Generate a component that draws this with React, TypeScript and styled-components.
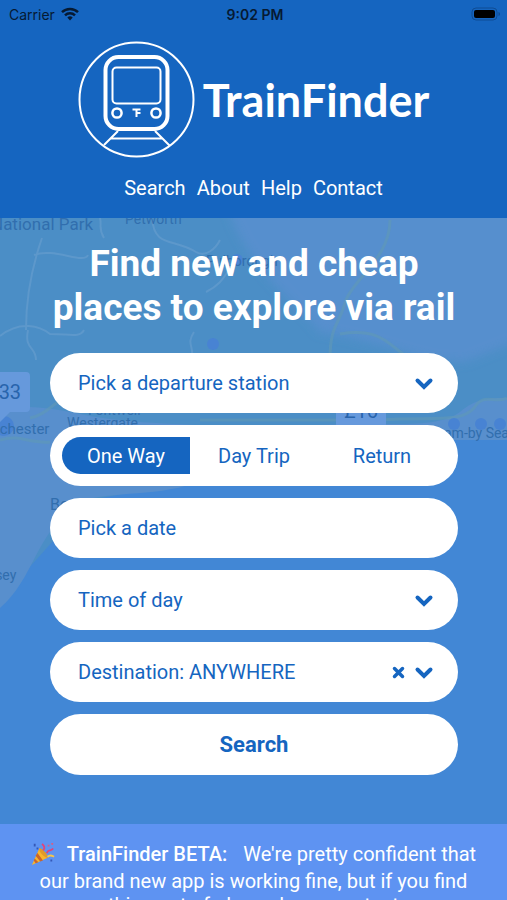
import React, { useState } from "react";
import styled, { createGlobalStyle } from "styled-components";

const BLUE = "#1565c0";

const GlobalStyle = createGlobalStyle`
  *, *::before, *::after { box-sizing: border-box; }
  html, body, #root { height: 100%; }
  body { margin: 0; background: #4287d5; font-family: Roboto, sans-serif; scrollbar-width: none; }
  html { scrollbar-width: none; }
  button, input, select { font: inherit; color: inherit; border: 0; margin: 0; }
`;

const Page = styled.div`
  display: flex;
  flex-direction: column;
  color: #fff;
  font-size: 20px;
`;

const Header = styled.header`
  background: ${BLUE};
  display: flex;
  flex-direction: column;
`;

const StatusBar = styled.div`
  display: grid;
  grid-template-columns: 1fr auto 1fr;
  align-items: center;
  height: 28px;
  padding: 0 6px 0 9px;
  color: #061a33;
  font-family: Inter, sans-serif;
  font-size: 14px;
`;

const Carrier = styled.span`
  display: flex;
  align-items: center;
  gap: 6px;
`;

const Clock = styled.span`
  font-weight: 600;
`;

const Battery = styled.svg`
  justify-self: end;
`;

const Brand = styled.a`
  display: flex;
  align-items: center;
  justify-content: center;
  gap: 8px;
  padding-top: 13px;
  color: #fff;
  text-decoration: none;
`;

const BrandName = styled.span`
  font-family: Lato, sans-serif;
  font-weight: 700;
  font-size: 45px;
  line-height: 52px;
`;

const Nav = styled.nav`
  display: flex;
  justify-content: center;
  gap: 11px;
  padding: 18px 0;
  line-height: 24px;
`;

const NavLink = styled.a`
  color: #fff;
  text-decoration: none;
`;

const Hero = styled.main`
  position: relative;
  padding: 24px 49px 49px 50px;
`;

const MapArt = styled.svg`
  position: absolute;
  top: 0;
  left: 0;
  width: 100%;
  height: 100%;
`;

const Title = styled.h1`
  position: relative;
  margin: 0 -8px 23px;
  font-size: 37px;
  line-height: 44px;
  font-weight: 700;
  text-align: center;
  text-wrap: balance;
`;

const Form = styled.form`
  position: relative;
  display: flex;
  flex-direction: column;
  gap: 12px;
`;

const Field = styled.div`
  display: flex;
  align-items: center;
  height: 60px;
  padding: 0 24px 0 28px;
  gap: 8px;
  border-radius: 30px;
  background: #fff;
  color: ${BLUE};
`;

const Select = styled.select`
  flex: 1;
  min-width: 0;
  height: 100%;
  appearance: none;
  background: transparent;
  outline: none;
`;

const DateInput = styled.input`
  flex: 1;
  min-width: 0;
  height: 100%;
  padding: 0;
  background: transparent;
  outline: none;
  &::placeholder { color: ${BLUE}; opacity: 1; }
`;

const ClearButton = styled.button`
  display: flex;
  padding: 0;
  background: transparent;
`;

const Chevron = styled.svg`
  pointer-events: none;
`;

const Trips = styled.div`
  display: grid;
  grid-template-columns: repeat(3, 1fr);
  padding: 12px;
  border-radius: 31px;
  background: #fff;
`;

const TripButton = styled.button<{ $active: boolean }>`
  height: 37px;
  padding: 0;
  background: ${(p) => (p.$active ? BLUE : "transparent")};
  color: ${(p) => (p.$active ? "#fff" : BLUE)};
  &:first-child { border-radius: 19px 0 0 19px; }
  &:last-child { border-radius: 0 19px 19px 0; }
`;

const SearchButton = styled.button`
  height: 61px;
  border-radius: 31px;
  background: #fff;
  color: ${BLUE};
  font-size: 22px;
  font-weight: 700;
`;

const Banner = styled.aside`
  padding: 15px 28px;
  background: #5e93f2;
  line-height: 24px;
  text-align: center;
`;

const BannerTitle = styled.strong`
  margin: 0 11px 0 7px;
  font-weight: 500;
  line-height: 30px;
`;

const Party = styled.svg`
  vertical-align: -5px;
`;

const Down = () => (
  <Chevron width="20" height="16" viewBox="0 0 20 16" fill="none" stroke={BLUE} strokeWidth="4" strokeLinecap="round" strokeLinejoin="miter" aria-hidden="true">
    <path d="M3.500 5.500 10 12l6.500-6.500" />
  </Chevron>
);

const TrainLogo = () => (
  <svg width="117" height="117" viewBox="0 0 117 117" fill="none" stroke="#fff" aria-hidden="true">
    <circle cx="58.5" cy="58.5" r="57" strokeWidth="2" />
    <rect x="27.500" y="16" width="62" height="72" rx="13" strokeWidth="4" />
    <rect x="34.500" y="26.500" width="48" height="36" rx="4" strokeWidth="2" />
    <circle cx="39" cy="72" r="4.600" strokeWidth="2.500" />
    <circle cx="78" cy="72" r="4.600" strokeWidth="2.500" />
    <path d="M54.500 68.500h8M58.500 68v8M58.500 72h4" strokeWidth="2" />
    <path d="M40 90 26 104M77 90l15 15M33 97.500h51" strokeWidth="2" />
  </svg>
);

const BackgroundMap = () => (
  <MapArt viewBox="0 0 507 606" preserveAspectRatio="xMidYMin slice" fontFamily="Roboto, sans-serif" aria-hidden="true">
    <defs>
      <filter id="soft" x="-10%" y="-10%" width="120%" height="120%">
        <feGaussianBlur stdDeviation="5" />
      </filter>
    </defs>
    <rect width="507" height="606" fill="#4287d5" />
    <path d="M0 0h507v222H340l-140 40-110 20-90 100z" fill="#4b8ec6" />
    <path d="M225-20h300v140l-60 24-30-2c-30-6-70-22-116-28-20-30-74-60-94-134z" fill="#578fce" filter="url(#soft)" />
    <path d="M0 192c30-6 50-2 90 6 60 10 160 12 260 8 60 0 90 2 110-12 16-14 30-14 47-14v42H350c-60 6-100 14-140 36-40 22-90 14-125 24-50 28-48 76-85 108z" fill="#588fcd" />
    <g fill="none" stroke="#699fce" strokeWidth="2" opacity=".6">
      <path d="M42 20c-14 40-16 70-16 92M34 37c20-8 50 10 54 0M0 118c20-16 40-10 50-2 20 0 30 4 34-4M28 112c-4 20 8 16 8 30M152 0c2 30 22 20 44 34 10 6 20-4 24-12M104 20c-6-10-2-12-4-20M192 140c2-12-6-14 2-26M206 74c20-10 20-22 30-30" />
    </g>
    <g fill="none" stroke="#5f98b7" strokeWidth="3" opacity=".65">
      <path d="M390 2c0 40-40 60-46 86-6 20-14 20-14 54M340 116c50-8 50 20 80 28M0 222c20-6 30 4 50 2M30 200c20-4 22-18 40-20M200 202h180c50-4 80 4 94-12 10-16 20-4 33-10" />
    </g>
    <g fill="#4883d3">
      <circle cx="237" cy="42" r="6" />
      <circle cx="213" cy="126" r="6" />
      <circle cx="454" cy="206" r="6" />
      <circle cx="481" cy="206" r="6" />
      <circle cx="500" cy="206" r="6" />
      <circle cx="4" cy="208" r="10" />
    </g>
    <g fill="#316eae" fontSize="14">
      <text x="-9" y="12" fontSize="17">National Park</text>
      <text x="125" y="6">Petworth</text>
      <text x="206" y="48">Pulborough</text>
      <text x="-22" y="216" fontSize="15">Chichester</text>
      <text x="88" y="197">Fontwell</text>
      <text x="67" y="210">Westergate</text>
      <text x="50" y="292" fontSize="16">Bognor</text>
      <text x="-24" y="362">Selsey</text>
      <text x="509" y="220" textAnchor="end">Shoreham-by Sea</text>
    </g>
    <g>
      <path d="M0 154h26q4 0 4 4v32q0 4-4 4H10L0 204z" fill="#6699dc" />
      <rect x="336" y="160" width="50" height="50" rx="4" fill="#6699dc" />
      <g fill="#2864ac" fontSize="20">
        <text x="-13" y="181">£33</text>
        <text x="344" y="200">£16</text>
      </g>
    </g>
  </MapArt>
);

export default function App() {
  const [trip, setTrip] = useState("One Way");
  const [destination, setDestination] = useState("any");
  return (
    <>
      <GlobalStyle />
      <Page>
        <Header>
          <StatusBar>
            <Carrier>
              Carrier
              <svg width="18" height="14" viewBox="0 0 18 14" fill="none" stroke="#061a33" strokeWidth="2.500" aria-hidden="true">
                <path d="M1 5.200a11.500 11.500 0 0 1 16 0M4 8.300a7.200 7.200 0 0 1 10 0" />
                <path d="M6.300 10.600a4 4 0 0 1 5.400 0L9 13.400z" fill="#061a33" stroke="none" />
              </svg>
            </Carrier>
            <Clock>9:02 PM</Clock>
            <Battery width="30" height="14" viewBox="0 0 30 14" aria-label="Battery full">
              <rect x="1" y="1" width="25" height="12" rx="4" fill="none" stroke="#0f4c94" />
              <rect x="3" y="3" width="21" height="8" rx="2" fill="#000" />
              <path d="M27.500 5c2 .5 2 3.500 0 4z" fill="#0f4c94" />
            </Battery>
          </StatusBar>
          <Brand href="#home">
            <TrainLogo />
            <BrandName>TrainFinder</BrandName>
          </Brand>
          <Nav>
            <NavLink href="#search">Search</NavLink>
            <NavLink href="#about">About</NavLink>
            <NavLink href="#help">Help</NavLink>
            <NavLink href="#contact">Contact</NavLink>
          </Nav>
        </Header>
        <Hero>
          <BackgroundMap />
          <Title>Find new and cheap places to explore via rail</Title>
          <Form id="search" onSubmit={(e) => e.preventDefault()}>
            <Field>
              <Select aria-label="Departure station" defaultValue="">
                <option value="">Pick a departure station</option>
              </Select>
              <Down />
            </Field>
            <Trips role="group" aria-label="Trip type">
              {["One Way", "Day Trip", "Return"].map((name) => (
                <TripButton key={name} type="button" $active={trip === name} aria-pressed={trip === name} onClick={() => setTrip(name)}>
                  {name}
                </TripButton>
              ))}
            </Trips>
            <Field>
              <DateInput aria-label="Date" placeholder="Pick a date" />
            </Field>
            <Field>
              <Select aria-label="Time of day" defaultValue="">
                <option value="">Time of day</option>
              </Select>
              <Down />
            </Field>
            <Field>
              <Select aria-label="Destination" value={destination} onChange={(e) => setDestination(e.target.value)}>
                <option value="any">Destination: ANYWHERE</option>
              </Select>
              <ClearButton type="button" aria-label="Clear destination" onClick={() => setDestination("any")}>
                <svg width="16" height="16" viewBox="0 0 16 16" stroke={BLUE} strokeWidth="3.500" strokeLinecap="round" aria-hidden="true">
                  <path d="m4.500 4.500 8 8M12.500 4.500l-8 8" />
                </svg>
              </ClearButton>
              <Down />
            </Field>
            <SearchButton type="submit">Search</SearchButton>
          </Form>
        </Hero>
        <Banner>
          <Party width="24" height="24" viewBox="0 0 26 26" aria-hidden="true">
            <path d="M1 25 9 7c4 2 8 6 9 10z" fill="#f9b52b" />
            <path d="m7 12 6 8-3 1-5-6zM4 18l4 4-3 1-2-3z" fill="#c9652c" />
            <path d="M9 7c1-2 10 6 9 10-2 1-10-6-9-10z" fill="#e09a2a" />
            <path d="M13 9c3-2 1-5-1-7M17 12c2-5 4-1 7-5" fill="none" stroke="#e0457b" strokeWidth="2" />
            <path d="M18 16c3-3 5-1 7 0" fill="none" stroke="#f7c64a" strokeWidth="2" />
            <path d="M3 2h2v3H3zM6 6h2v2H6zM21 19h2v2h-2z" fill="#3559b8" />
            <path d="M18 3h2v2h-2zM22 1h2v2h-2z" fill="#d95c86" />
          </Party>{" "}
          <BannerTitle>TrainFinder BETA:</BannerTitle> We're pretty confident that our brand new app is working fine, but if you find anything out of place please contact us.
        </Banner>
      </Page>
    </>
  );
}
